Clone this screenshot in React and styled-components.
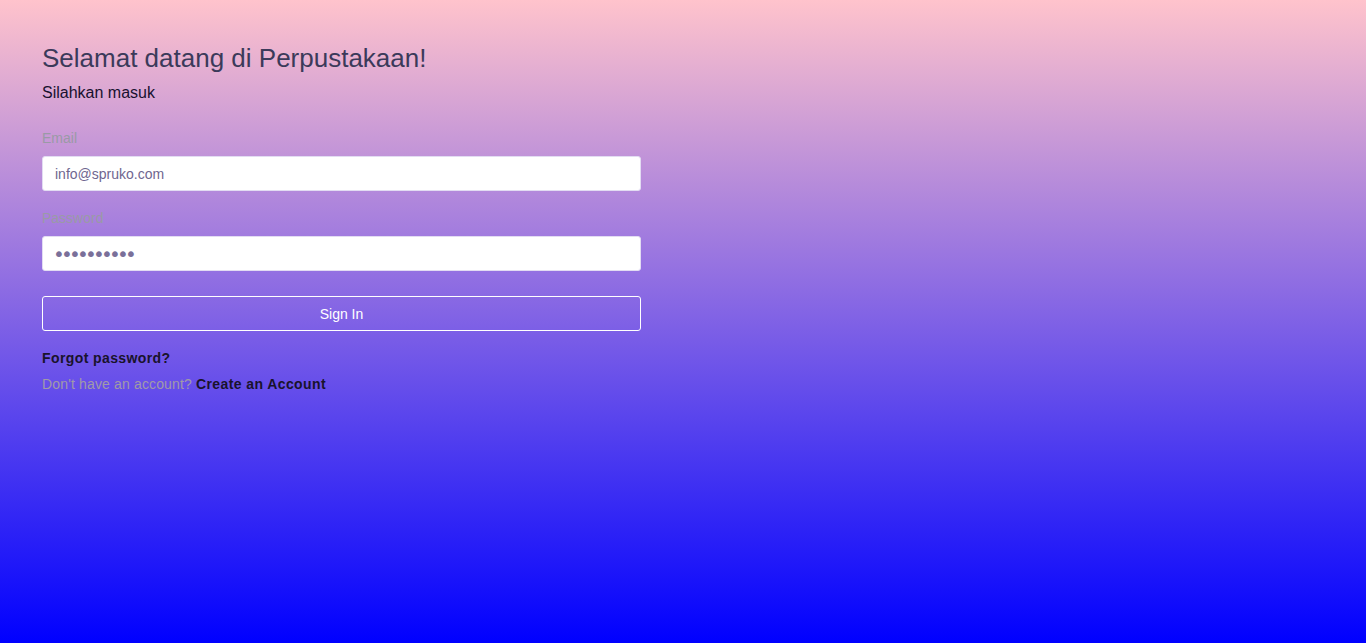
import React from 'react';
import styled, { createGlobalStyle } from 'styled-components';

const GlobalStyle = createGlobalStyle`
  html, body {
    margin: 0;
    padding: 0;
    height: 100%;
  }
  body {
    font-family: "Liberation Sans", Arial, sans-serif;
  }
  #root {
    min-height: 100%;
  }
`;

const Page = styled.div`
  min-height: 643px;
  background: linear-gradient(#ffc3cc, #0000ff);
  padding: 42px 42px 0;
  box-sizing: border-box;
`;

const Card = styled.div`
  width: 599px;
`;

const Title = styled.h1`
  margin: 0;
  font-size: 26px;
  font-weight: 400;
  color: #3b3a5a;
  line-height: 32px;
`;

const Subtitle = styled.p`
  margin: 9px 0 0;
  font-size: 16px;
  color: #17112e;
  line-height: 20px;
`;

const Form = styled.form`
  margin-top: 26px;
  display: flex;
  flex-direction: column;
`;

const Group = styled.div`
  display: flex;
  flex-direction: column;
  margin-bottom: 18px;
`;

const Label = styled.label`
  font-size: 14px;
  color: #9a9aa6;
  line-height: 18px;
  margin-bottom: 9px;
`;

const Input = styled.input`
  height: 35px;
  box-sizing: border-box;
  border: 1px solid #e2dcf2;
  border-radius: 3px;
  background: #fff;
  padding: 0 12px;
  font-family: inherit;
  font-size: 14px;
  color: #6f668f;
  outline: none;
  &::placeholder {
    color: #6f668f;
  }
`;

const SecretInput = styled(Input)`
  font-family: "DejaVu Sans", sans-serif;
  font-size: 20px;
  letter-spacing: -3.8px;
  padding-left: 10px;
  color: #7a7099;
`;

const Button = styled.button`
  margin-top: 7px;
  height: 35px;
  border: 1px solid #fff;
  border-radius: 3px;
  background: transparent;
  color: #fff;
  font-family: inherit;
  font-size: 14px;
  cursor: pointer;
`;

const Links = styled.div`
  margin-top: 18px;
  display: flex;
  flex-direction: column;
  gap: 8px;
  font-size: 14px;
  line-height: 18px;
`;

const Muted = styled.span`
  color: #a09aa8;
  letter-spacing: 0.15px;
`;

const Strong = styled.a`
  font-weight: 700;
  color: #19132b;
  text-decoration: none;
  letter-spacing: 0.4px;
`;

export default function App() {
  return (
    <>
      <GlobalStyle />
      <Page>
        <Card>
          <Title>Selamat datang di Perpustakaan!</Title>
          <Subtitle>Silahkan masuk</Subtitle>
          <Form onSubmit={(e) => e.preventDefault()}>
            <Group>
              <Label>Email</Label>
              <Input type="email" placeholder="info@spruko.com" />
            </Group>
            <Group>
              <Label>Password</Label>
              <SecretInput type="password" defaultValue="1234567890" />
            </Group>
            <Button type="submit">Sign In</Button>
          </Form>
          <Links>
            <div><Strong href="#">Forgot password?</Strong></div>
            <div>
              <Muted>Don't have an account? </Muted>
              <Strong href="#">Create an Account</Strong>
            </div>
          </Links>
        </Card>
      </Page>
    </>
  );
}
